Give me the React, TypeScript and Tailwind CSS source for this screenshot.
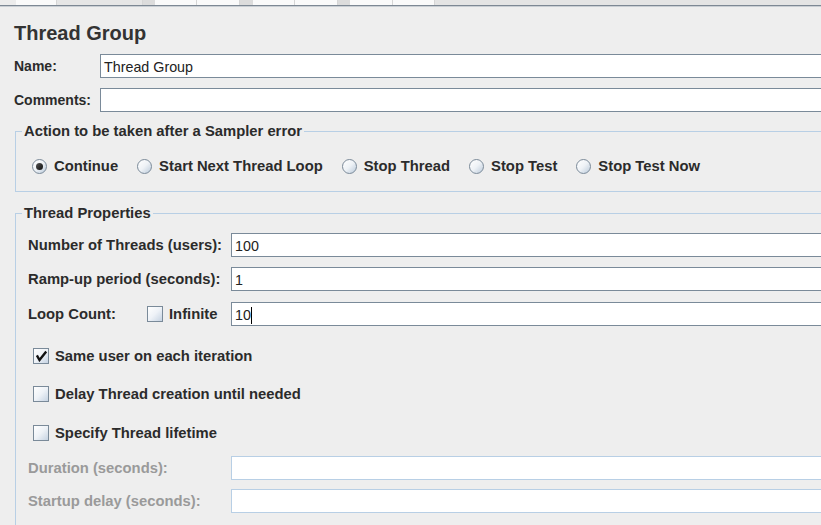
import React from 'react'

const radios = [
  { label: 'Continue', checked: true },
  { label: 'Start Next Thread Loop', checked: false },
  { label: 'Stop Thread', checked: false },
  { label: 'Stop Test', checked: false },
  { label: 'Stop Test Now', checked: false },
]

function Radio({ checked }: { checked: boolean }) {
  return (
    <span className="w-[15px] h-[15px] rounded-full border border-[#7b8a99] bg-gradient-to-br from-white via-[#eef2f6] to-[#bccbdb] flex items-center justify-center shrink-0">
      {checked && <span className="w-[7px] h-[7px] rounded-full bg-gradient-to-br from-[#555] to-[#111]" />}
    </span>
  )
}

function Check({ checked }: { checked?: boolean }) {
  return (
    <span className="w-[16px] h-[16px] border border-[#7a8a99] bg-gradient-to-br from-white via-[#eef2f7] to-[#c6d3e2] flex items-center justify-center shrink-0">
      {checked && (
        <svg width="12" height="12" viewBox="0 0 12 12">
          <path d="M2.5 6.5 L4.5 10 L10.5 2.5" fill="none" stroke="#111" strokeWidth="2.4" strokeLinecap="square" />
        </svg>
      )}
    </span>
  )
}

function Field({ value, disabled, cursor }: { value?: string; disabled?: boolean; cursor?: boolean }) {
  return (
    <div
      className={`flex-1 h-[24px] bg-white border flex items-center pl-[3px] pt-[2px] text-[14.3px] text-[#222] ${
        disabled ? 'border-[#b8cfe5]' : 'border-[#7a8a99]'
      }`}
    >
      {value}
      {cursor && <span className="w-px h-[17px] bg-black" />}
    </div>
  )
}

function PropRow({ label, children, muted }: { label: string; children: React.ReactNode; muted?: boolean }) {
  return (
    <div className="flex items-center h-[24px]">
      <span className={`w-[203px] shrink-0 font-bold ${muted ? 'text-[#9a9a9a]' : ''}`}>{label}</span>
      {children}
    </div>
  )
}

function CheckRow({ label, checked, className }: { label: string; checked?: boolean; className: string }) {
  return (
    <div className={`flex items-center h-[24px] pl-[5px] gap-[6px] ${className}`}>
      <Check checked={checked} />
      <span className="font-bold">{label}</span>
    </div>
  )
}

export default function App() {
  return (
    <div className="w-[821px] h-[525px] overflow-hidden bg-[#eeeeee] text-[#2b2b2b] text-[14px] leading-4 font-['Liberation_Sans',Arial,sans-serif]">
      {/* tab strip remnants */}
      <div className="h-[5px] flex bg-[#e6e6e6]">
        <div className="w-[16px] bg-[#ececec]" />
        <div className="w-[41px] bg-[#fafafa] border-r border-[#d6d6d6]" />
        <div className="w-[86px] bg-[#e6e6e6] border-r border-[#d6d6d6]" />
        <div className="w-[12px] bg-[#dcdcdc]" />
        <div className="w-[42px] bg-[#fafafa] border-r border-[#d6d6d6]" />
        <div className="w-[43px] bg-[#fafafa] border-r border-[#d6d6d6]" />
        <div className="w-[13px] bg-[#dcdcdc]" />
        <div className="w-[42px] bg-[#fafafa] border-r border-[#d6d6d6]" />
        <div className="w-[43px] bg-[#fafafa] border-r border-[#d6d6d6]" />
        <div className="w-[12px] bg-[#dcdcdc]" />
        <div className="w-[43px] bg-[#fafafa] border-r border-[#d6d6d6]" />
        <div className="w-[42px] bg-[#fafafa] border-r border-[#d6d6d6]" />
        <div className="flex-1 bg-[#e4e4e4]" />
      </div>
      <div className="h-px bg-[#7d8894]" />
      <div className="h-px bg-[#c9ced3]" />

      <div className="w-[900px] pl-[14px]">
        <h1 className="mt-[14px] text-[20px] leading-6 font-bold text-[#333]">Thread Group</h1>

        <div className="mt-[9px] flex items-center h-[24px]">
          <span className="w-[86px] font-bold">Name:</span>
          <Field value="Thread Group" />
        </div>
        <div className="mt-[10px] flex items-center h-[24px]">
          <span className="w-[86px] font-bold">Comments:</span>
          <Field />
        </div>

        <fieldset className="mt-[11px] ml-px border border-[#b8cfe5] pt-[17px] pb-[15px] pl-[16px] text-[14.8px]">
          <legend className="-ml-[10px] px-[2px] font-bold leading-4">Action to be taken after a Sampler error</legend>
          <div className="flex items-center h-[20px] gap-[19px]">
            {radios.map(r => (
              <div key={r.label} className="flex items-center gap-[7px]">
                <Radio checked={r.checked} />
                <span className="font-bold">{r.label}</span>
              </div>
            ))}
          </div>
        </fieldset>

        <fieldset className="mt-[13px] ml-px border border-[#b8cfe5] pt-[12px] pl-[12px] pb-[40px] text-[14.8px]">
          <legend className="-ml-[6px] px-[2px] font-bold leading-4">Thread Properties</legend>

          <PropRow label="Number of Threads (users):">
            <Field value="100" />
          </PropRow>
          <div className="mt-[10px]">
            <PropRow label="Ramp-up period (seconds):">
              <Field value="1" />
            </PropRow>
          </div>
          <div className="mt-[11px] flex items-center h-[24px]">
            <span className="w-[119px] shrink-0 font-bold">Loop Count:</span>
            <div className="w-[84px] shrink-0 flex items-center gap-[6px]">
              <Check />
              <span className="font-bold">Infinite</span>
            </div>
            <Field value="10" cursor />
          </div>

          <CheckRow label="Same user on each iteration" checked className="mt-[18px]" />
          <CheckRow label="Delay Thread creation until needed" className="mt-[14px]" />
          <CheckRow label="Specify Thread lifetime" className="mt-[15px]" />

          <div className="mt-[11px]">
            <PropRow label="Duration (seconds):" muted>
              <Field disabled />
            </PropRow>
          </div>
          <div className="mt-[9px]">
            <PropRow label="Startup delay (seconds):" muted>
              <Field disabled />
            </PropRow>
          </div>
        </fieldset>
      </div>
    </div>
  )
}
